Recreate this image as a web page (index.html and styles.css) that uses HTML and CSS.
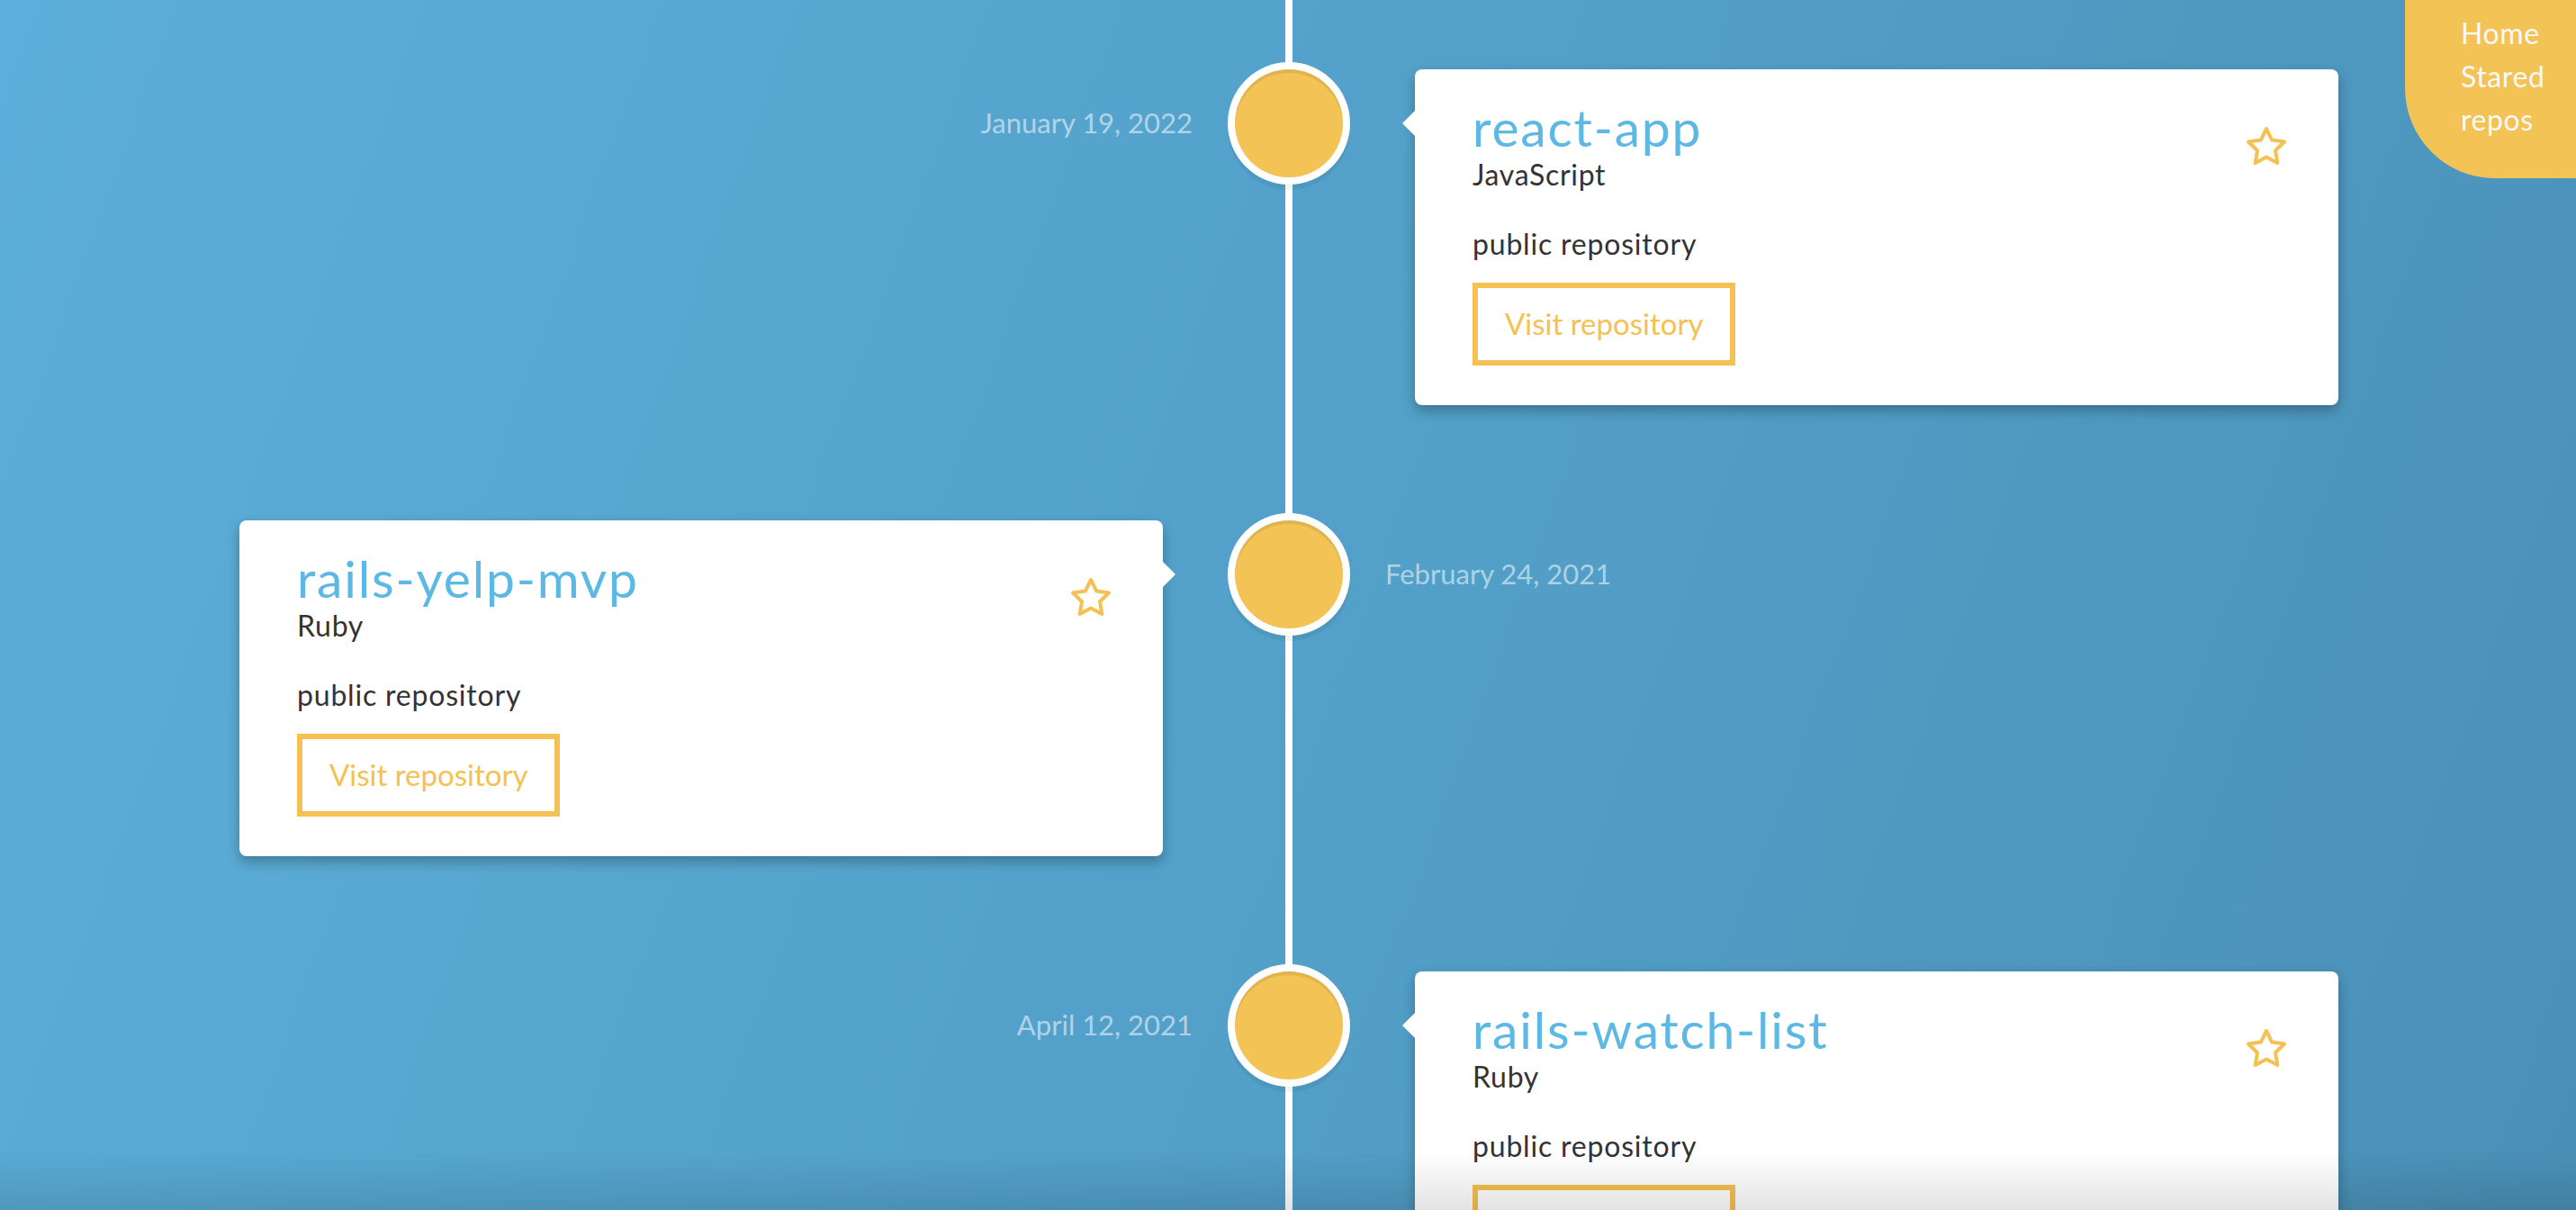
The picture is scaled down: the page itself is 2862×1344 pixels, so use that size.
FILE: index.html
```html
<!DOCTYPE html>
<html lang="en">
<head>
<meta charset="utf-8">
<title>Repositories timeline</title>
<link rel="stylesheet" href="styles.css">
</head>
<body>
<nav class="nav">
  <a class="nav-link" href="#">Home</a>
  <a class="nav-link" href="#">Stared repos</a>
</nav>

<main class="timeline">
  <section class="element">
    <span class="date date-left">January 19, 2022</span>
    <span class="icon"></span>
    <article class="card card-right">
      <span class="arrow arrow-left"></span>
      <div class="card-head">
        <div>
          <h3 class="title">react-app</h3>
          <p class="lang">JavaScript</p>
        </div>
        <svg class="star" viewBox="0 0 24 24" width="48" height="48"><polygon points="12 2 15.09 8.26 22 9.27 17 14.14 18.18 21.02 12 17.77 5.82 21.02 7 14.14 2 9.27 8.91 8.26 12 2"/></svg>
      </div>
      <p class="visibility">public repository</p>
      <a class="btn" href="#">Visit repository</a>
    </article>
  </section>

  <section class="element">
    <article class="card card-left">
      <span class="arrow arrow-right"></span>
      <div class="card-head">
        <div>
          <h3 class="title">rails-yelp-mvp</h3>
          <p class="lang">Ruby</p>
        </div>
        <svg class="star" viewBox="0 0 24 24" width="48" height="48"><polygon points="12 2 15.09 8.26 22 9.27 17 14.14 18.18 21.02 12 17.77 5.82 21.02 7 14.14 2 9.27 8.91 8.26 12 2"/></svg>
      </div>
      <p class="visibility">public repository</p>
      <a class="btn" href="#">Visit repository</a>
    </article>
    <span class="icon"></span>
    <span class="date date-right">February 24, 2021</span>
  </section>

  <section class="element">
    <span class="date date-left">April 12, 2021</span>
    <span class="icon"></span>
    <article class="card card-right">
      <span class="arrow arrow-left"></span>
      <div class="card-head">
        <div>
          <h3 class="title">rails-watch-list</h3>
          <p class="lang">Ruby</p>
        </div>
        <svg class="star" viewBox="0 0 24 24" width="48" height="48"><polygon points="12 2 15.09 8.26 22 9.27 17 14.14 18.18 21.02 12 17.77 5.82 21.02 7 14.14 2 9.27 8.91 8.26 12 2"/></svg>
      </div>
      <p class="visibility">public repository</p>
      <a class="btn" href="#">Visit repository</a>
    </article>
  </section>
</main>

<div class="bottom-fade"></div>
</body>
</html>
```

FILE: styles.css
```css
html, body {
  margin: 0;
  padding: 0;
}

body {
  min-height: 100vh;
  overflow: hidden;
  font-family: Lato, "Open Sans", sans-serif;
  color: #333;
  background: linear-gradient(110deg, #5cafda 0%, #529fc8 55%, #4a90b6 100%);
  background-attachment: fixed;
}

/* ---------- navigation ---------- */
.nav {
  position: fixed;
  top: 0;
  right: 0;
  width: 190px;
  height: 198px;
  box-sizing: border-box;
  padding: 13px 16px 0 62px;
  background: #f4c355;
  border-bottom-left-radius: 100px;
  display: flex;
  flex-direction: column;
  z-index: 5;
}

.nav-link {
  color: #f8f8f8;
  text-decoration: none;
  font-size: 32px;
  line-height: 48px;
  letter-spacing: 0.6px;
}

/* ---------- timeline ---------- */
.timeline {
  position: relative;
  width: 2332px;
  margin: 0 0 0 266px;
  padding: 77px 0 200px;
}

.timeline::before {
  content: "";
  position: absolute;
  top: 0;
  bottom: 0;
  left: 50%;
  width: 8px;
  margin-left: -4px;
  background: #fff;
}

.element {
  position: relative;
  display: grid;
  grid-template-columns: 1fr 136px 1fr;
  column-gap: 39px;
  align-items: start;
  margin-bottom: 128px;
}

.icon {
  justify-self: center;
  width: 120px;
  height: 120px;
  border-radius: 50%;
  background: #f4c355;
  box-shadow: 0 0 0 8px #fff, inset 0 4px 0 rgba(0, 0, 0, 0.08), 0 6px 0 8px rgba(0, 0, 0, 0.05);
  position: relative;
  z-index: 1;
}

.date {
  margin-top: 41px;
  font-size: 31px;
  line-height: 1.2;
  color: rgba(255, 255, 255, 0.55);
}

.date-left {
  text-align: right;
}

.date-right {
  text-align: left;
}

/* ---------- card ---------- */
.card {
  position: relative;
  background: #fff;
  border-radius: 8px;
  padding: 31px 56px 44px 64px;
  box-shadow: 0 6px 14px rgba(0, 0, 0, 0.28);
}

.card-right {
  margin-left: 33px;
}

.card-left {
  margin-right: 33px;
}

.arrow {
  position: absolute;
  top: 46px;
  width: 0;
  height: 0;
  border: 14px solid transparent;
}

.arrow-left {
  right: 100%;
  border-right-color: #fff;
}

.arrow-right {
  left: 100%;
  border-left-color: #fff;
}

.card-head {
  display: flex;
  justify-content: space-between;
  align-items: flex-start;
}

.title {
  margin: 0;
  font-size: 57px;
  line-height: 66px;
  font-weight: 400;
  color: #5eb8e4;
  letter-spacing: 1.8px;
}

.lang {
  margin: 0;
  font-size: 32px;
  line-height: 40px;
  color: #333;
  letter-spacing: 0.7px;
}

.star {
  margin-top: 31px;
  fill: none;
  stroke: #f4c152;
  stroke-width: 2;
  stroke-linejoin: round;
  stroke-linecap: round;
}

.visibility {
  margin: 37px 0 0;
  font-size: 32px;
  line-height: 40px;
  color: #333;
  letter-spacing: 0.8px;
}

.btn {
  display: inline-block;
  margin-top: 23px;
  padding: 19px 30px 21px;
  border: 6px solid #f4c152;
  font-size: 33px;
  line-height: 40px;
  color: #f4c152;
  text-decoration: none;
}

/* ---------- bottom shade ---------- */
.bottom-fade {
  position: fixed;
  left: 0;
  right: 0;
  bottom: 0;
  height: 64px;
  background: linear-gradient(to bottom, rgba(0, 0, 0, 0), rgba(0, 0, 0, 0.11));
  pointer-events: none;
  z-index: 4;
}
```
